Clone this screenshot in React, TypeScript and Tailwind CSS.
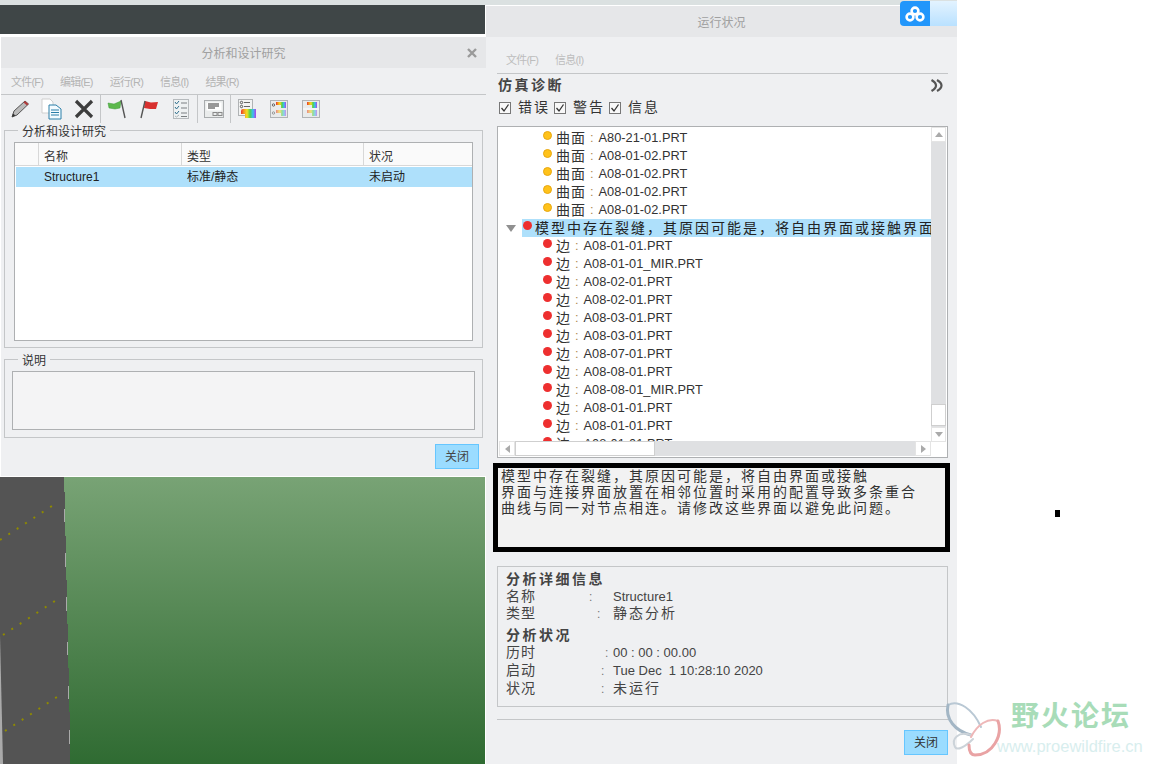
import React from "react";

const F = '[font-family:"Liberation_Sans","Noto_Sans_CJK_SC",sans-serif]';

function Rainbow({ id }: { id: string }) {
  return (
    <linearGradient id={id} x1="0" x2="1" y1="0" y2="0">
      <stop offset="0" stopColor="#e8352b" />
      <stop offset=".2" stopColor="#f59a20" />
      <stop offset=".4" stopColor="#f5e020" />
      <stop offset=".6" stopColor="#4fd04f" />
      <stop offset=".8" stopColor="#38c0f5" />
      <stop offset="1" stopColor="#b040e8" />
    </linearGradient>
  );
}

const icons: Record<string, React.ReactNode> = {
  pencil: (
    <svg width="20" height="20" viewBox="0 0 20 20">
      <path d="M2 18 L4 12 L15 2 L18.5 5 L7 16 Z" fill="#bbb" stroke="#555" strokeWidth="1" />
      <path d="M13.5 3.5 L15 2 L18.5 5 L17 6.5 Z" fill="#b23b3b" />
      <path d="M2 18 L3 14.5 L5.5 16.5 Z" fill="#333" />
    </svg>
  ),
  doc: (
    <svg width="22" height="22" viewBox="0 0 22 22">
      <path d="M1 1 H9 L12 4 V15 H1 Z" fill="#fff" stroke="#cfcfcf" />
      <path d="M8 7 H15 L20 11 V21 H8 Z" fill="#f4fbff" stroke="#2a7ea8" />
      <path d="M10 12 H18 M10 14.500 H18 M10 17 H18" stroke="#2a7ea8" />
    </svg>
  ),
  x: (
    <svg width="20" height="20" viewBox="0 0 20 20">
      <path d="M2 2 L18 18 M18 2 L2 18" stroke="#3d3d3d" strokeWidth="3.2" />
    </svg>
  ),
  green: (
    <svg width="20" height="20" viewBox="0 0 20 20">
      <path d="M1 4 L7 5 L14 2 L13 9 L8 10 L2 9 Z" fill="#5cb84c" stroke="#3f9a3a" strokeWidth=".5" />
      <path d="M14 1 L18 19" stroke="#555" strokeWidth="1.4" />
    </svg>
  ),
  red: (
    <svg width="20" height="20" viewBox="0 0 20 20">
      <path d="M6 2 L12 3.500 L19 3 L17 10 L11 10 L5 9 Z" fill="#d8302f" />
      <path d="M6 2 L2 19" stroke="#555" strokeWidth="1.4" />
    </svg>
  ),
  check: (
    <svg width="16" height="20" viewBox="0 0 16 20">
      <rect x=".5" y=".5" width="15" height="19" fill="#eef1f2" stroke="#b6babd" />
      <path d="M2 3 L3.500 5 L6 2 M2 8 L3.500 10 L6 7 M2 13 L3.500 15 L6 12" stroke="#2e6f8e" fill="none" />
      <path d="M2 17 L3.500 18 L6 16" stroke="#aab4b8" fill="none" />
      <path d="M8 4 H14 M8 9 H14 M8 14 H14 M8 17.500 H14" stroke="#7a7f82" />
    </svg>
  ),
  form: (
    <svg width="20" height="18" viewBox="0 0 20 18">
      <rect x=".5" y=".5" width="19" height="17" fill="#eaecec" stroke="#a9acae" />
      <rect x="2.500" y="2.500" width="15" height="8" fill="#fff" />
      <path d="M4 4 H15 M4 6 H15 M4 8 H11" stroke="#333" />
      <rect x="9" y="12.500" width="4" height="3" fill="none" stroke="#888" />
      <rect x="14" y="12.500" width="4" height="3" fill="none" stroke="#888" />
    </svg>
  ),
  r1: (
    <svg width="18" height="20" viewBox="0 0 18 20">
      <defs><Rainbow id="ra" /></defs>
      <rect x=".5" y=".5" width="14" height="16" fill="#f2f3f3" stroke="#b0b3b5" />
      <circle cx="3.500" cy="3.500" r="1.200" fill="none" stroke="#555" />
      <circle cx="3.500" cy="7.500" r="1.200" fill="none" stroke="#555" />
      <path d="M6 3.500 H12 M6 7.500 H12" stroke="#666" />
      <path d="M3 12 Q3 10 5 10 H18 V19 H7 V15 H3 Z" fill="url(#ra)" />
    </svg>
  ),
  r2: (
    <svg width="18" height="18" viewBox="0 0 18 18">
      <defs><Rainbow id="rb" /></defs>
      <rect x=".5" y=".5" width="17" height="17" fill="#e9ebeb" stroke="#b0b3b5" />
      <circle cx="3.500" cy="5" r="1.200" fill="none" stroke="#666" />
      <circle cx="3.500" cy="13" r="1.200" fill="none" stroke="#999" />
      <path d="M6 2 H16 V8 H11 V5 H6 Z" fill="url(#rb)" />
      <path d="M6 10 H16 V16 H11 V13 H6 Z" fill="url(#rb)" opacity=".55" />
    </svg>
  ),
  r3: (
    <svg width="18" height="18" viewBox="0 0 18 18">
      <defs><Rainbow id="rc" /></defs>
      <rect x=".5" y=".5" width="17" height="17" fill="#e9ebeb" stroke="#b0b3b5" />
      <path d="M1 9 H17" stroke="#fff" />
      <path d="M5 2 H15 V8 H10 V5 H5 Z" fill="url(#rc)" />
      <path d="M5 10 H15 V16 H10 V13 H5 Z" fill="url(#rc)" opacity=".55" />
    </svg>
  ),
};

function Tool({ n }: { n: string }) {
  return <div className="w-8 h-full flex items-center justify-center shrink-0">{icons[n]}</div>;
}
function Sep() {
  return <div className="w-px h-full bg-[#c4c6c8] shrink-0" />;
}

function Dot({ c }: { c: "y" | "r" }) {
  return (
    <span
      className={
        c === "y"
          ? "w-[9px] h-[9px] rounded-full bg-[#ffc21a] border border-[#e8a70f] shrink-0 -mt-[5px]"
          : "w-[9px] h-[9px] rounded-full bg-[#ee2f2f] shrink-0 -mt-[5px]"
      }
    />
  );
}

function Row({ c, label, file }: { c: "y" | "r"; label: string; file: string }) {
  return (
    <div className="h-[18px] flex items-center pl-[41px] whitespace-nowrap">
      <Dot c={c} />
      <span className="ml-[4px] text-[14px] tracking-[1px] text-[#333]">{label}</span>
      <span className="ml-[4px] text-[12.8px] text-[#b08a50]">:</span>
      <span className="ml-[5px] text-[12.8px] text-[#333]">{file}</span>
    </div>
  );
}

function Check({ label }: { label: string }) {
  return (
    <div className="flex items-center">
      <span className="w-[12px] h-[12px] border border-[#777] bg-[#f8f8f8] flex items-center justify-center">
        <svg width="10" height="10" viewBox="0 0 10 10">
          <path d="M1.500 5 L4 8 L8.500 1.500" fill="none" stroke="#333" strokeWidth="1.3" />
        </svg>
      </span>
      <span className="ml-[7px] mr-[4px] text-[14px] tracking-[2px] text-[#333]">{label}</span>
    </div>
  );
}

function Detail({ label, colon, tall = true, children }: { label: string; colon: number; tall?: boolean; children: React.ReactNode }) {
  return (
    <div className={tall ? "grid grid-cols-[107px_1fr] h-[18px] items-center text-[#444]" : "grid grid-cols-[107px_1fr] h-[17px] items-center text-[#444]"}>
      <div className="flex text-[14px] tracking-[1px] items-center">
        <span className="w-[30px]">{label}</span>
        <span className="text-[12px] text-[#777]" style={{ marginLeft: colon }}>
          :
        </span>
      </div>
      <div className="text-[13px] whitespace-pre">{children}</div>
    </div>
  );
}

export default function App() {
  return (
    <div className={`relative w-[1152px] h-[764px] bg-white overflow-hidden flex ${F}`}>
      {/* left column */}
      <div className="w-[486px] h-full flex flex-col shrink-0">
        <div className="h-[5px] bg-[#dbe1e1] shrink-0" />
        <div className="h-[29px] bg-[#3f4647] mr-[1px] shrink-0" />
        <div className="h-[3px] shrink-0" />
        <div className="h-[439px] ml-[1px] bg-[#eff0f2] flex flex-col shrink-0">
          <div className="h-[31px] pt-[3px] bg-[#e6e7e9] flex items-center justify-center relative text-[12px] text-[#a0a0a0] shrink-0">
            分析和设计研究
            <svg className="absolute right-[9px] top-[11px]" width="10" height="10" viewBox="0 0 10 10">
              <path d="M1 1 L9 9 M9 1 L1 9" stroke="#9a9a9a" strokeWidth="2.4" />
            </svg>
          </div>
          <div className="h-[27px] border-b border-[#c4c6c8] flex items-center pl-[10px] gap-[17px] text-[11px] tracking-[-0.8px] text-[#b4b4b4] shrink-0 pt-[2px]">
            <span>文件(F)</span>
            <span>编辑(E)</span>
            <span>运行(R)</span>
            <span>信息(I)</span>
            <span>结果(R)</span>
          </div>
          <div className="h-[28px] flex pl-[3px] shrink-0">
            <Tool n="pencil" />
            <Tool n="doc" />
            <Tool n="x" />
            <Sep />
            <Tool n="green" />
            <Tool n="red" />
            <Tool n="check" />
            <Sep />
            <Tool n="form" />
            <Sep />
            <Tool n="r1" />
            <Tool n="r2" />
            <Tool n="r3" />
          </div>
          <div className="relative mx-[3px] mt-[7px] h-[218px] border border-[#c4c6c8] pt-[11px] pl-[9px] pr-[8px] pb-[6px] shrink-0">
            <span className="absolute left-[13px] -top-[7px] bg-[#eff0f2] px-[4px] text-[12px] leading-[16px] text-[#333]">
              分析和设计研究
            </span>
            <div className="h-full w-[459px] border border-[#aeb0b2] bg-white">
              <div className="grid grid-cols-[23px_143px_182px_1fr] h-[23px] bg-[#fafafa] border-b border-[#d8d8d8] text-[12px] text-[#333]">
                <div />
                <div className="border-l border-[#d8d8d8] pl-[5px] pt-[5px] flex items-center">名称</div>
                <div className="border-l border-[#d8d8d8] pl-[5px] pt-[5px] flex items-center">类型</div>
                <div className="border-l border-[#d8d8d8] pl-[5px] pt-[5px] flex items-center">状况</div>
              </div>
              <div className="grid grid-cols-[23px_143px_182px_1fr] h-[20px] bg-[#aee0fb] text-[12px] text-[#222] ml-px mt-px">
                <div />
                <div className="pl-[5px] flex items-center">Structure1</div>
                <div className="pl-[5px] flex items-center">标准/静态</div>
                <div className="pl-[5px] flex items-center">未启动</div>
              </div>
            </div>
          </div>
          <div className="relative mx-[3px] mt-[11px] h-[79px] border border-[#c4c6c8] pt-[11px] px-[7px] shrink-0">
            <span className="absolute left-[13px] -top-[7px] bg-[#eff0f2] px-[4px] text-[12px] leading-[16px] text-[#333]">
              说明
            </span>
            <div className="h-[59px] border border-[#aeb0b2] bg-[#f4f4f5]" />
          </div>
          <div className="flex justify-end pr-[7px] mt-[6px]">
            <div className="w-[44px] h-[25px] bg-[#9bdcff] border border-[#66c6ff] flex items-center justify-center text-[12px] text-[#444]">
              关闭
            </div>
          </div>
        </div>
        <div className="h-[1px] shrink-0" />
        <div className="flex-1 mr-[1px] bg-gradient-to-b from-[#78a375] to-[#2f6b32]">
          <svg width="485" height="287" viewBox="0 0 485 287" className="block">
            <path d="M0 0 H64 V15 H65 V59 H66 V103 H67 V147 H68 V191 H69 V235 H70 V287 H0 Z" fill="#545454" />
            <path d="M0 158 L3 287 H0 Z" fill="#aaaaaa" />
            <path d="M0 63 L58 25 M3 158 L61 120 M5 254 L63 216" stroke="#8f8a00" strokeWidth="2" strokeDasharray="2 8" fill="none" />
            <path d="M64.500 32 V45 M65.500 76 V90 M66.500 120 V134 M67.500 165 V178 M68.500 209 V222 M69.500 253 V267" stroke="#aaaaaa" />
          </svg>
        </div>
      </div>

      {/* right column */}
      <div className="w-[471px] h-full flex flex-col shrink-0">
        <div className="h-[5px] bg-[#dbe1e1] shrink-0" />
        <div className="h-px shrink-0" />
        <div className="flex-1 bg-[#eff0f2] flex flex-col">
          <div className="h-[31px] pt-[3px] bg-[#e6e7e9] flex items-center justify-center text-[12px] text-[#a0a0a0] shrink-0">
            运行状况
          </div>
          <div className="ml-[11px] mr-[9px] h-[37px] border-b border-[#c4c6c8] flex items-end pb-[5px] pl-[9px] gap-[17px] text-[11px] tracking-[-0.8px] text-[#bdbdbd] shrink-0">
            <span>文件(F)</span>
            <span>信息(I)</span>
          </div>
          <div className="ml-[12px] mr-[9px] h-[23px] flex items-center justify-between shrink-0">
            <span className="text-[14px] font-bold tracking-[2.5px] text-[#444]">仿真诊断</span>
            <svg className="mr-[5px]" width="13" height="13" viewBox="0 0 13 13">
              <path d="M1.500 1 C5 3 6 5 6 6.500 C6 8 5 10 1.500 12 M7 1 C10.500 3 11.500 5 11.500 6.500 C11.500 8 10.500 10 7 12" fill="none" stroke="#555" strokeWidth="2.2" />
            </svg>
          </div>
          <div className="mx-[13px] h-[21px] flex items-center shrink-0">
            <Check label="错误" />
            <Check label="警告" />
            <Check label="信息" />
          </div>
          <div className="relative ml-[11px] mr-[9px] mt-[8px] h-[332px] border border-[#aeb0b2] bg-white shrink-0 overflow-hidden">
            <div className="h-[314px] w-[433px] overflow-hidden pt-[2px] pl-[4px]">
              <Row c="y" label="曲面" file="A80-21-01.PRT" />
              <Row c="y" label="曲面" file="A08-01-02.PRT" />
              <Row c="y" label="曲面" file="A08-01-02.PRT" />
              <Row c="y" label="曲面" file="A08-01-02.PRT" />
              <Row c="y" label="曲面" file="A08-01-02.PRT" />
              <div className="h-[18px] flex items-center whitespace-nowrap">
                <svg className="ml-[4px] shrink-0" width="10" height="7" viewBox="0 0 10 7">
                  <path d="M0 0 H10 L5 7 Z" fill="#909090" />
                </svg>
                <div className="ml-[6px] pl-[1px] flex-1 h-full bg-[#aee0fb] flex items-center overflow-hidden">
                  <Dot c="r" />
                  <span className="ml-[3px] text-[14px] tracking-[2px] text-[#222]">模型中存在裂缝，其原因可能是，将自由界面或接触界面放置</span>
                </div>
              </div>
              {[
                "A08-01-01.PRT",
                "A08-01-01_MIR.PRT",
                "A08-02-01.PRT",
                "A08-02-01.PRT",
                "A08-03-01.PRT",
                "A08-03-01.PRT",
                "A08-07-01.PRT",
                "A08-08-01.PRT",
                "A08-08-01_MIR.PRT",
                "A08-01-01.PRT",
                "A08-01-01.PRT",
                "A08-01-01.PRT",
              ].map((f, i) => (
                <Row key={i} c="r" label="边" file={f} />
              ))}
            </div>
            {/* vertical scrollbar */}
            <div className="absolute left-[433px] top-0 w-[15px] h-[315px] bg-[#dfe0e2] flex flex-col justify-between">
              <div className="h-[15px] bg-white border border-[#e4e4e4] flex items-center justify-center">
                <svg width="8" height="5" viewBox="0 0 8 5"><path d="M0 5 L4 0 L8 5 Z" fill="#aaa" /></svg>
              </div>
              <div className="flex flex-col">
                <div className="h-[22px] mb-[1px] bg-white border border-[#cfcfcf]" />
                <div className="h-[15px] bg-white border border-[#e4e4e4] flex items-center justify-center">
                  <svg width="8" height="5" viewBox="0 0 8 5"><path d="M0 0 L4 5 L8 0 Z" fill="#aaa" /></svg>
                </div>
              </div>
            </div>
            {/* horizontal scrollbar */}
            <div className="absolute left-[1px] top-[314px] w-[432px] h-[15px] bg-[#dfe0e2] flex items-center">
              <div className="w-[16px] h-full bg-white border border-[#e4e4e4] flex items-center justify-center">
                <svg width="5" height="8" viewBox="0 0 5 8"><path d="M5 0 L0 4 L5 8 Z" fill="#aaa" /></svg>
              </div>
              <div className="w-[140px] h-full bg-white border border-[#cfcfcf]" />
              <div className="ml-auto w-[16px] h-full bg-white border border-[#e4e4e4] flex items-center justify-center">
                <svg width="5" height="8" viewBox="0 0 5 8"><path d="M0 0 L5 4 L0 8 Z" fill="#aaa" /></svg>
              </div>
            </div>
          </div>
          <div className="ml-[7px] mt-[5px] w-[457px] h-[89px] border-[5px] border-black bg-[#f2f2f2] pl-[3px] text-[14px] leading-[16px] tracking-[2px] text-[#333] whitespace-nowrap shrink-0">
            <div>模型中存在裂缝，其原因可能是，将自由界面或接触</div>
            <div>界面与连接界面放置在相邻位置时采用的配置导致多条重合</div>
            <div>曲线与同一对节点相连。请修改这些界面以避免此问题。</div>
          </div>
          <div className="ml-[11px] mr-[9px] mt-[14px] h-[141px] border border-[#c4c6c8] pl-[8px] pt-[4px] shrink-0">
            <div className="h-[15px] leading-[16px] text-[14px] font-bold tracking-[2.5px] text-[#444]">分析详细信息</div>
            <Detail label="名称" colon={53} tall={false}>Structure1</Detail>
            <Detail label="类型" colon={61} tall={false}><span className="text-[14px] tracking-[2px]">静态分析</span></Detail>
            <div className="h-[15px] mt-[7px] leading-[16px] text-[14px] font-bold tracking-[2.5px] text-[#444]">分析状况</div>
            <Detail label="历时" colon={69}>00 : 00 : 00.00</Detail>
            <Detail label="启动" colon={65}>Tue Dec  1 10:28:10 2020</Detail>
            <Detail label="状况" colon={65}><span className="text-[14px] tracking-[2px]">未运行</span></Detail>
          </div>
          <div className="ml-[11px] mr-[9px] mt-[12px] h-px bg-[#c4c6c8] shrink-0" />
          <div className="flex justify-end pr-[9px] mt-[10px]">
            <div className="w-[44px] h-[25px] bg-[#9bdcff] border border-[#66c6ff] flex items-center justify-center text-[12px] text-[#333]">
              关闭
            </div>
          </div>
        </div>
      </div>

      {/* cloud widget overlay */}
      <div className="absolute left-[900px] top-[1px] w-[57px] h-[25px] rounded-l-[4px] overflow-hidden flex">
        <div className="w-[30px] h-full bg-[#2196fb] flex items-center justify-center">
          <svg width="20" height="16" viewBox="0 0 20 16">
            <g fill="none" stroke="#fff" strokeWidth="2.6">
              <circle cx="10" cy="5" r="3.400" />
              <circle cx="5" cy="11" r="3.400" />
              <circle cx="15" cy="11" r="3.400" />
            </g>
          </svg>
        </div>
        <div className="flex-1 bg-gradient-to-b from-[#e3f3ff] to-[#b9e1ff]" />
      </div>

      {/* stray pixel */}
      <div className="absolute left-[1055px] top-[510px] w-[5px] h-[7px] bg-black" />

      {/* watermark */}
      <div className="absolute left-[943px] top-[697px] w-[209px] h-[62px] pointer-events-none">
        <svg className="absolute left-0 top-0" width="60" height="62" viewBox="0 0 60 62">
          <g fill="none" strokeLinecap="round">
            <path d="M5 8 C15 2 30 12 38 30" stroke="#b9c8d4" strokeWidth="2" />
            <path d="M5 8 C2 22 12 34 28 38" stroke="#a3b6c5" strokeWidth="3" />
            <path d="M28 38 C15 34 8 42 12 50 C14 54 22 50 30 42" stroke="#ccd3d9" strokeWidth="2" />
            <path d="M55 24 C45 20 34 28 28 40" stroke="#eeb7b8" strokeWidth="2" />
            <path d="M55 24 C60 38 50 58 32 58 C28 58 26 54 26 48" stroke="#e9a3a4" strokeWidth="3" />
          </g>
        </svg>
        <span className="absolute left-[68px] top-[3px] text-[28px] leading-[34px] font-bold tracking-[2px] text-[#a8dcb8] whitespace-nowrap">野火论坛</span>
        <span className="absolute left-[54px] top-[40px] text-[16.500px] leading-[18px] text-[#d8eeee] whitespace-nowrap">www.proewildfire.cn</span>
      </div>
    </div>
  );
}
